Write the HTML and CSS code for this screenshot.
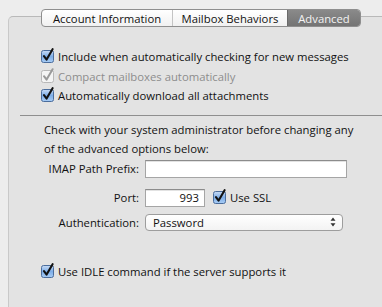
FILE: index.html
```html
<!DOCTYPE html>
<html>
<head>
<meta charset="utf-8">
<link rel="stylesheet" href="styles.css">
</head>
<body>
<div class="window">
  <div class="tabs">
    <div class="tab tab-first">Account Information</div>
    <div class="tab">Mailbox Behaviors</div>
    <div class="tab tab-active">Advanced</div>
  </div>
  <div class="panel">
    <div class="checks">
      <div class="row">
        <svg class="cb" viewBox="0 0 16 16" width="16" height="16"><defs><linearGradient id="g1" x1="0" y1="0" x2="0" y2="1"><stop offset="0" stop-color="#c9dcf5"/><stop offset="0.5" stop-color="#7eaee8"/><stop offset="1" stop-color="#a9cdf5"/></linearGradient></defs><rect x="1.5" y="3.5" width="12" height="12" rx="2" fill="url(#g1)" stroke="#4b6d9c"/><path d="M4 9.2 L6.6 12.6 L12.6 2.2" fill="none" stroke="#111" stroke-width="2.1" stroke-linecap="round" stroke-linejoin="round"/></svg>
        <span>Include when automatically checking for new messages</span>
      </div>
      <div class="row disabled">
        <svg class="cb" viewBox="0 0 16 16" width="16" height="16"><rect x="1.5" y="3.5" width="12" height="12" rx="2" fill="#f4f4f4" stroke="#b8b8b8"/><path d="M4 9.2 L6.6 12.6 L12.6 2.2" fill="none" stroke="#9a9a9a" stroke-width="2" stroke-linecap="round" stroke-linejoin="round"/></svg>
        <span>Compact mailboxes automatically</span>
      </div>
      <div class="row">
        <svg class="cb" viewBox="0 0 16 16" width="16" height="16"><defs><linearGradient id="g2" x1="0" y1="0" x2="0" y2="1"><stop offset="0" stop-color="#c9dcf5"/><stop offset="0.5" stop-color="#7eaee8"/><stop offset="1" stop-color="#a9cdf5"/></linearGradient></defs><rect x="1.5" y="3.5" width="12" height="12" rx="2" fill="url(#g2)" stroke="#4b6d9c"/><path d="M4 9.2 L6.6 12.6 L12.6 2.2" fill="none" stroke="#111" stroke-width="2.1" stroke-linecap="round" stroke-linejoin="round"/></svg>
        <span>Automatically download all attachments</span>
      </div>
    </div>
    <div class="sep"></div>
    <p class="note">Check with your system administrator before changing any<br>of the advanced options below:</p>
    <div class="form">
      <div class="frow frow-imap">
        <label class="lbl">IMAP Path Prefix:</label>
        <div class="field field-wide"></div>
      </div>
      <div class="frow frow-port">
        <label class="lbl">Port:</label>
        <div class="field field-port">993</div>
        <svg class="cb cb-ssl" viewBox="0 0 16 16" width="16" height="16"><defs><linearGradient id="g3" x1="0" y1="0" x2="0" y2="1"><stop offset="0" stop-color="#c9dcf5"/><stop offset="0.5" stop-color="#7eaee8"/><stop offset="1" stop-color="#a9cdf5"/></linearGradient></defs><rect x="1.5" y="3.5" width="12" height="12" rx="2" fill="url(#g3)" stroke="#4b6d9c"/><path d="M4 9.2 L6.6 12.6 L12.6 2.2" fill="none" stroke="#111" stroke-width="2.1" stroke-linecap="round" stroke-linejoin="round"/></svg>
        <span>Use SSL</span>
      </div>
      <div class="frow frow-auth">
        <label class="lbl">Authentication:</label>
        <div class="popup"><span>Password</span><svg class="arrows" viewBox="0 0 6 10" width="6" height="10"><path d="M3 0.5 L5.5 3.8 L0.5 3.8 Z M3 9.5 L5.5 6.2 L0.5 6.2 Z" fill="#333"/></svg></div>
      </div>
    </div>
    <div class="row row-idle">
      <svg class="cb" viewBox="0 0 16 16" width="16" height="16"><defs><linearGradient id="g4" x1="0" y1="0" x2="0" y2="1"><stop offset="0" stop-color="#c9dcf5"/><stop offset="0.5" stop-color="#7eaee8"/><stop offset="1" stop-color="#a9cdf5"/></linearGradient></defs><rect x="1.5" y="3.5" width="12" height="12" rx="2" fill="url(#g4)" stroke="#4b6d9c"/><path d="M4 9.2 L6.6 12.6 L12.6 2.2" fill="none" stroke="#111" stroke-width="2.1" stroke-linecap="round" stroke-linejoin="round"/></svg>
      <span>Use IDLE command if the server supports it</span>
    </div>
  </div>
</div>
</body>
</html>
```
FILE: styles.css
```css
html, body {
  margin: 0;
  padding: 0;
  height: 100%;
  overflow: hidden;
}
body {
  background: #ededed;
  font-family: "Open Sans", "DejaVu Sans", sans-serif;
  font-size: 11.3px;
  color: #111;
}
.window {
  padding-top: 9px;
  height: 100%;
  box-sizing: border-box;
  display: flex;
  flex-direction: column;
}
.tabs {
  display: flex;
  margin-left: 41px;
  height: 18px;
  width: 320px;
  box-sizing: border-box;
  border: 1px solid #8e8e8e;
  border-radius: 4px;
  background: linear-gradient(#ffffff, #f1f1f1);
  overflow: hidden;
  position: relative;
  z-index: 1;
  margin-bottom: -11px;
}
.tab {
  display: flex;
  align-items: center;
  justify-content: center;
  color: #111;
  border-left: 1px solid #c4c4c4;
}
.tab-first {
  border-left: 0;
  width: 130px;
}
.tab:nth-child(2) {
  width: 114px;
}
.tab-active {
  flex: 1;
  background: linear-gradient(#8a8a8a, #747474);
  color: #f4f4f4;
  border-left: 1px solid #6a6a6a;
}
.panel {
  flex: 1;
  margin-left: 8px;
  background: #e3e3e3;
  border-top: 1px solid #b9b9b9;
  border-left: 1px solid #c9c9c9;
  border-top-left-radius: 5px;
  padding-top: 30px;
}
.checks {
  padding-left: 31px;
}
.row {
  display: flex;
  align-items: center;
  height: 19.5px;
  gap: 2px;
}
.cb {
  flex: none;
  margin-top: -3px;
}
.disabled {
  color: #8d8d8d;
}
.sep {
  margin: 9px 0 0 11px;
  height: 1px;
  background: #8f8f8f;
}
.note {
  margin: 4px 0 0 35px;
  line-height: 19px;
  white-space: nowrap;
}
.form {
  margin-top: 2px;
}
.frow {
  display: flex;
  align-items: center;
}
.lbl {
  width: 130px;
  text-align: right;
  margin-right: 6px;
  flex: none;
}
.field {
  height: 18px;
  box-sizing: border-box;
  background: #fff;
  border: 1px solid #a5a5a5;
  border-top-color: #8c8c8c;
  box-shadow: inset 0 1px 0 #e2e2e2;
}
.field-wide {
  width: 202px;
}
.frow-port {
  margin-top: 11px;
}
.field-port {
  width: 60px;
  text-align: right;
  line-height: 16px;
  padding-right: 5px;
}
.cb-ssl {
  margin-left: 7px;
  margin-right: 2px;
}
.frow-auth {
  margin-top: 7px;
}
.popup {
  width: 198px;
  height: 17px;
  box-sizing: border-box;
  border: 1px solid #9d9d9d;
  border-radius: 4px;
  background: linear-gradient(#ffffff, #f3f3f3);
  display: flex;
  align-items: center;
  justify-content: space-between;
  padding: 0 6px 0 7px;
}
.row-idle {
  padding-left: 31px;
  margin-top: 31px;
}
```
